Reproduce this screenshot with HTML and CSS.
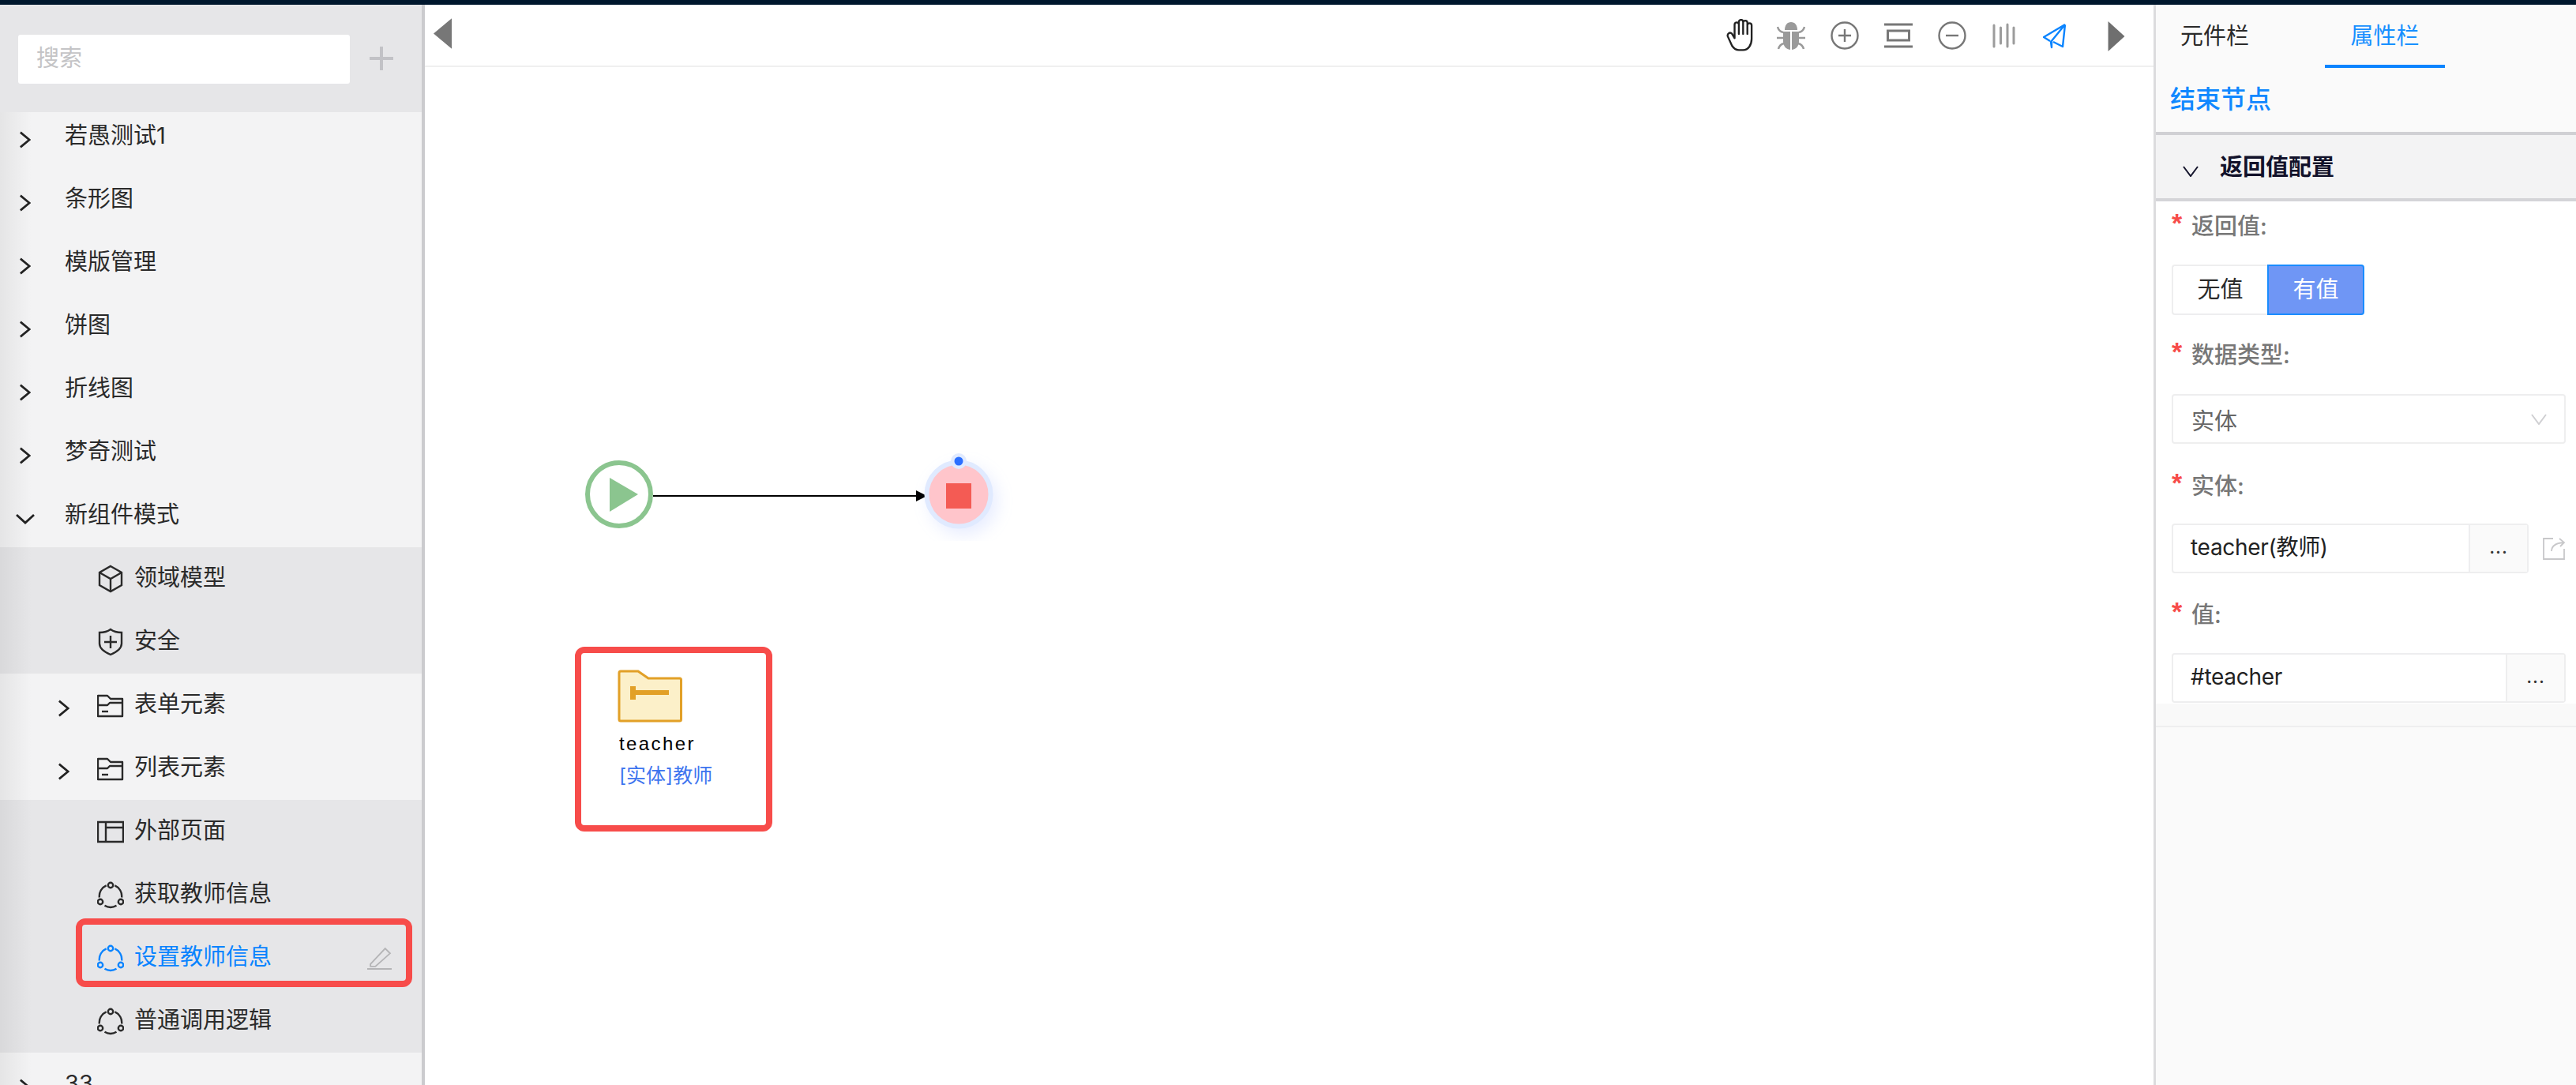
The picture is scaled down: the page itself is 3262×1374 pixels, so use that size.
FILE: index.html
```html
<!DOCTYPE html>
<html lang="zh-CN">
<head>
<meta charset="utf-8">
<title>流程设计</title>
<link rel="stylesheet" href="styles.css">
</head>
<body>
<div class="topbar"></div>
<div class="main">
  <aside class="sidebar">
    <div class="search-bar">
      <div class="search-input">搜索</div>
      <svg class="add" viewBox="0 0 30 30"><path d="M15 0V30M0 15H30"/></svg>
    </div>
    <div class="tree">
      <div class="row"><svg class="chev" viewBox="0 0 16 24"><path d="M2 2L14 12L2 22"/></svg><span class="label">若愚测试1</span></div>
      <div class="row"><svg class="chev" viewBox="0 0 16 24"><path d="M2 2L14 12L2 22"/></svg><span class="label">条形图</span></div>
      <div class="row"><svg class="chev" viewBox="0 0 16 24"><path d="M2 2L14 12L2 22"/></svg><span class="label">模版管理</span></div>
      <div class="row"><svg class="chev" viewBox="0 0 16 24"><path d="M2 2L14 12L2 22"/></svg><span class="label">饼图</span></div>
      <div class="row"><svg class="chev" viewBox="0 0 16 24"><path d="M2 2L14 12L2 22"/></svg><span class="label">折线图</span></div>
      <div class="row"><svg class="chev" viewBox="0 0 16 24"><path d="M2 2L14 12L2 22"/></svg><span class="label">梦奇测试</span></div>
      <div class="row"><svg class="chev open" viewBox="0 0 24 16"><path d="M1 3L12 13L23 3"/></svg><span class="label">新组件模式</span></div>
      <div class="group">
        <div class="row sub"><svg class="ico" viewBox="0 0 34 36"><path d="M17 2L31 10V26L17 34L3 26V10Z"/><path d="M3 10L17 18L31 10M17 18V34"/></svg><span class="label">领域模型</span></div>
        <div class="row sub"><svg class="ico" viewBox="0 0 34 36"><path d="M17 2C21 5 26 6 31 6V20C31 27 24 31 17 34C10 31 3 27 3 20V6C8 6 13 5 17 2Z"/><path d="M9 18H25M17 10V26"/></svg><span class="label">安全</span></div>
      </div>
      <div class="row sub2"><svg class="chev" viewBox="0 0 16 24"><path d="M2 2L14 12L2 22"/></svg><svg class="ico" viewBox="0 0 34 36"><path d="M1 6H13L17 10H32V32H1Z M1 18H13L16 15H33" stroke-linejoin="round"/><path d="M6 26H14"/></svg><span class="label">表单元素</span></div>
      <div class="row sub2"><svg class="chev" viewBox="0 0 16 24"><path d="M2 2L14 12L2 22"/></svg><svg class="ico" viewBox="0 0 34 36"><path d="M1 6H13L17 10H32V32H1Z M1 18H13L16 15H33" stroke-linejoin="round"/><path d="M6 26H14"/></svg><span class="label">列表元素</span></div>
      <div class="group">
        <div class="row sub"><svg class="ico" viewBox="0 0 34 36"><path d="M1 6H33V31H1Z M11 6V31 M11 13H33"/></svg><span class="label">外部页面</span></div>
        <div class="row sub"><svg class="ico" viewBox="0 0 34 36"><use href="#logic"/></svg><span class="label">获取教师信息</span></div>
        <div class="row sub active"><svg class="ico" viewBox="0 0 34 36"><use href="#logic"/></svg><span class="label">设置教师信息</span>
          <svg class="pen" viewBox="0 0 30 30"><path d="M4 23L22 4L28 10L10 26H4Z M0 29H30"/></svg>
          <div class="mark"></div>
        </div>
        <div class="row sub"><svg class="ico" viewBox="0 0 34 36"><use href="#logic"/></svg><span class="label">普通调用逻辑</span></div>
      </div>
      <div class="row"><svg class="chev" viewBox="0 0 16 24"><path d="M2 2L14 12L2 22"/></svg><span class="label">33</span></div>
    </div>
    <svg class="defs" width="0" height="0"><defs>
      <g id="logic"><circle cx="17" cy="6" r="3.2"/><circle cx="4" cy="27" r="3.2"/><circle cx="30" cy="27" r="3.2"/><path d="M11.6 6.400A14.500 14.500 0 0 0 2.900 21.500M22.400 6.400A14.500 14.500 0 0 1 31.100 21.500M9.500 31.800A14.500 14.500 0 0 0 24.500 31.800"/></g>
    </defs></svg>
  </aside>

  <section class="canvas">
    <div class="toolbar">
      <svg class="tri-left" viewBox="0 0 24 40"><path d="M24 0V40L0 20Z"/></svg>
      <div class="tools">
        <svg class="tool hand" viewBox="0 1.500 32 38"><path d="M10 24V8a2.500 2.500 0 0 1 5 0V5a2.500 2.500 0 0 1 5 0V6a2.500 2.500 0 0 1 5 0v3a2.500 2.500 0 0 1 5 0V25c0 7-4 13-10 13h-5c-4 0-6-2-8-5L2 22c-1-3 3-6 5-3l3 5M15 8V19M20 6V19M25 8V19" fill="none" stroke="#222" stroke-width="2.200" stroke-linecap="round" stroke-linejoin="round"/></svg>
        <svg class="tool" viewBox="0 0 36 38"><g fill="#9a9a9a"><path d="M10 12C10 6 13 2 18 2S26 6 26 12Z"/><path d="M8 14H17V37C11 36 8 32 8 26Z"/><path d="M19 14H28V26C28 32 25 36 19 37Z"/></g><path d="M1 8C2 12 4 14 8 15M35 8C34 12 32 14 28 15M0 22H8M28 22H36M2 36C3 32 5 30 9 29M34 36C33 32 31 30 27 29" fill="none" stroke="#9a9a9a" stroke-width="2.500"/></svg>
        <svg class="tool" viewBox="0 0 36 38"><g fill="none" stroke="#777" stroke-width="2.400"><circle cx="18" cy="19" r="16.500"/><path d="M10 19H26M18 11V27"/></g></svg>
        <svg class="tool" viewBox="0 0 36 38"><g fill="none" stroke="#777"><path d="M0 5H36M0 33H36" stroke-width="3"/><rect x="4.500" y="13" width="27" height="12" stroke-width="3"/></g></svg>
        <svg class="tool" viewBox="0 0 36 38"><g fill="none" stroke="#777" stroke-width="2.400"><circle cx="18" cy="19" r="16.500"/><path d="M10 19H26"/></g></svg>
        <svg class="tool" viewBox="0 0 36 38"><g stroke="#9c9c9c" stroke-width="3" stroke-linecap="round"><path d="M3 6V33M11.500 9V29M20 5V33M28 9V29"/></g></svg>
        <svg class="tool plane" viewBox="0 0 36 38"><path d="M28 5L1 21L9 26M28 5L10 27L11 34V26M28 5L25 33L13 27" fill="none" stroke="#0a84ff" stroke-width="2.400" stroke-linejoin="round"/></svg>
      </div>
      <svg class="tri-right" viewBox="0 0 22 40"><path d="M0 0V40L22 20Z"/></svg>
    </div>
    <div class="board">
      <svg class="flow" viewBox="0 0 1000 600" width="1000" height="600">
        <circle cx="246" cy="541" r="40" fill="#fff" stroke="#8bc58f" stroke-width="6"/>
        <path d="M234 520V563L270 541Z" fill="#8bc58f"/>
        <path d="M289 543H624" stroke="#000" stroke-width="2"/>
        <path d="M622 536L636 543L622 550Z" fill="#000"/>
        <circle class="end-node" cx="676" cy="541" r="40.500" fill="#ffc5cb" stroke="#e0eaff" stroke-width="6"/>
        <rect x="660" y="527" width="32" height="32" fill="#f45b54"/>
        <circle cx="676" cy="499" r="10" fill="#e0eaff"/>
        <circle cx="676" cy="499" r="5.500" fill="#2b6fff"/>
      </svg>
      <div class="entity">
        <svg class="folder" viewBox="0 0 84 68"><path d="M3 5a2 2 0 0 1 2-2H27L40 12H80a2 2 0 0 1 1.500 2V64a2 2 0 0 1-2 2H5a2 2 0 0 1-2-2Z" fill="#fcf0c9" stroke="#e2a027" stroke-width="3"/><path d="M17 22H24V27H66V33H24V39H17Z" fill="#e2a027"/></svg>
        <div class="entity-name">teacher</div>
        <div class="entity-type">[实体]教师</div>
      </div>
    </div>
  </section>

  <aside class="panel">
    <div class="tabs">
      <div class="tab">元件栏</div>
      <div class="tab on">属性栏</div>
    </div>
    <div class="node-title">结束节点</div>
    <div class="section-head"><svg class="sec-chev" viewBox="0 0 20 14"><path d="M1 1L10 13L19 1"/></svg><span>返回值配置</span></div>
    <div class="form">
      <div class="field-label"><i>*</i>返回值:</div>
      <div class="switch"><div class="opt">无值</div><div class="opt on">有值</div></div>
      <div class="field-label l2"><i>*</i>数据类型:</div>
      <div class="select"><span>实体</span><svg viewBox="0 0 20 14"><path d="M1 1L10 13L19 1"/></svg></div>
      <div class="field-label l3"><i>*</i>实体:</div>
      <div class="input-line">
        <div class="input short"><span class="val">teacher(教师)</span><span class="dots">...</span></div>
        <svg class="share" viewBox="0 0 28 28"><path d="M13 1H1V27H27V14M11 17C11 11 15 7 26 6M21 1L27 6L22 11"/></svg>
      </div>
      <div class="field-label l4"><i>*</i>值:</div>
      <div class="input wide"><span class="val">#teacher</span><span class="dots">...</span></div>
    </div>
    <div class="form-foot"></div>
  </aside>
</div>
</body>
</html>
```
FILE: styles.css
```css
* { box-sizing: border-box; }
html, body { margin: 0; height: 100%; overflow: hidden; }
body {
  width: 3262px;
  height: 1374px;
  background: #fff;
  font-family: "Inter", "Noto Sans CJK SC", sans-serif;
  color: #222;
}
.topbar { height: 6px; background: #00172d; }
.main { display: flex; height: 1368px; overflow: hidden; }

/* left sidebar */
.sidebar {
  position: relative;
  width: 538px;
  flex: none;
  background: #f3f3f4;
  border-right: 4px solid #cbcbce;
  overflow: hidden;
}
.sidebar::after {
  content: "";
  position: absolute;
  left: 0; top: 0; bottom: 0;
  width: 40px;
  background: linear-gradient(to right, rgba(0,0,0,.06), rgba(0,0,0,0));
  pointer-events: none;
}
.search-bar {
  position: relative;
  z-index: 1;
  height: 136px;
  background: #e6e6e8;
  display: flex;
  padding: 38px 0 0 23px;
}
.search-input {
  width: 420px;
  height: 62px;
  background: #fff;
  border-radius: 3px;
  color: #c4c4c6;
  font-size: 29px;
  line-height: 60px;
  padding-left: 23px;
}
.add { width: 30px; height: 30px; margin: 15px 0 0 25px; fill: none; stroke: #c2c2c6; stroke-width: 4; }
.tree { margin-top: -9px; }
.row {
  position: relative;
  display: flex;
  align-items: center;
  height: 80px;
  font-size: 29px;
  color: #2a2a2a;
  padding-left: 24px;
}
.label { line-height: 40px; position: relative; top: -1px; }
.chev { width: 15px; height: 24px; margin-top: 8px; margin-right: 43px; fill: none; stroke: #222; stroke-width: 2.800; flex: none; }
.chev.open { width: 24px; height: 16px; margin-left: -4px; margin-right: 38px; }
.group { background: #e6e6e8; }
.row.sub { padding-left: 123px; }
.row.sub2 { padding-left: 73px; }
.row.sub2 .chev { margin-right: 35px; }
.ico { width: 34px; height: 36px; margin-right: 13px; flex: none; fill: none; stroke: #2a2a2a; stroke-width: 2.400; }
.ico use { stroke: inherit; }
.defs { position: absolute; }
.active { color: #0a84ff; }
.active .ico { stroke: #0a84ff; }
.pen { position: absolute; right: 38px; top: 24px; width: 31px; height: 31px; fill: none; stroke: #b4b4b6; stroke-width: 1.800; }
.mark {
  position: absolute;
  left: 96px; top: -10px;
  width: 426px; height: 87px;
  border: 8px solid #f74c4a;
  border-radius: 12px;
}

/* canvas */
.canvas { flex: 1; min-width: 0; display: flex; flex-direction: column; }
.toolbar {
  height: 79px;
  flex: none;
  display: flex;
  align-items: flex-start;
  border-bottom: 2px solid #f0f0f0;
  padding: 20px 36px 0 11px;
}
.tri-left { width: 23px; height: 39px; fill: #777; margin-top: -3px; }
.tools { display: flex; gap: 32px; margin-left: auto; }
.tool { width: 36px; height: 38px; }
.tool.hand { position: relative; left: 3px; top: -2px; height: 41px; margin-bottom: -3px; }
.tool.plane { position: relative; left: -3px; }
.tri-right { width: 22px; height: 38px; margin: 1px 0 0 43px; fill: #6f6f6f; }
.board { position: relative; flex: 1; }
.flow { position: absolute; left: 0; top: 0; }
.end-node { filter: drop-shadow(6px 8px 10px rgba(110,140,255,.16)); }
.entity {
  position: absolute;
  left: 190px; top: 734px;
  width: 250px; height: 234px;
  border: 8px solid #f74c4a;
  border-radius: 12px;
  background: #fff;
  padding: 20px 0 0 45px;
}
.folder { display: block; width: 84px; height: 68px; }
.entity-name {
  font-family: "Liberation Sans", sans-serif;
  font-size: 24px;
  letter-spacing: 2.400px;
  line-height: 32px;
  color: #000;
  margin: 11px 0 0 3px;
}
.entity-type { font-size: 25px; line-height: 32px; color: #3f75ef; margin: 8px 0 0 3px; }

/* right panel */
.panel {
  width: 535px;
  flex: none;
  background: #fafafa;
  border-left: 3px solid #dcdcde;
  display: flex;
  flex-direction: column;
}
.tabs { display: flex; height: 80px; padding-left: 31px; }
.tab { font-size: 29px; line-height: 80px; color: #2a2a2a; position: relative; }
.tab.on {
  color: #1890ff;
  margin-left: 96px;
  width: 152px;
  text-align: center;
  border-bottom: 4px solid #0a84ff;
}
.node-title { font-size: 32px; font-weight: 500; color: #1088ff; line-height: 44px; padding: 18px 0 0 18px; height: 81px; }
.section-head {
  height: 88px;
  background: #f3f3f4;
  border-top: 4px solid #d0d0d4;
  border-bottom: 4px solid #d4d4d8;
  display: flex;
  align-items: center;
  font-size: 29px;
  font-weight: 700;
  color: #12122a;
  padding-left: 34px;
}
.section-head span { margin-left: 27px; position: relative; top: -2px; }
.sec-chev { width: 20px; height: 14px; margin-top: 12px; fill: none; stroke: #12122a; stroke-width: 2; }
.form { background: #fff; padding: 12px 13px 0 20px; height: 636px; }
.field-label { font-size: 29px; line-height: 40px; font-weight: 500; color: #777; height: 40px; }
.field-label i { font-style: normal; font-weight: 700; font-family: "Liberation Sans", sans-serif; color: #f74c4a; display: inline-block; width: 25px; font-size: 34px; line-height: 30px; position: relative; top: -3px; }
.switch { display: flex; margin-top: 28px; width: 244px; height: 64px; }
.opt { width: 121px; border: 2px solid #eeeeef; border-right: 0; border-radius: 4px 0 0 4px; background: #fff; text-align: center; line-height: 60px; font-size: 29px; color: #2a2a2a; }
.opt.on { width: 123px; background: #6f96f5; border: 2px solid #1a8cff; border-radius: 0 4px 4px 0; color: #fff; }
.l2 { margin-top: 31px; }
.select { display: flex; align-items: center; justify-content: space-between; margin-top: 29px; width: 499px; height: 63px; border: 2px solid #eeeeef; border-radius: 4px; padding: 0 22px 0 23px; font-size: 29px; color: #666; }
.select svg { width: 20px; height: 14px; fill: none; stroke: #cfcfd2; stroke-width: 2; }
.l3 { margin-top: 34px; }
.input-line { display: flex; align-items: center; gap: 18px; margin-top: 27px; }
.input { display: flex; height: 63px; border: 2px solid #eeeeef; border-radius: 4px; font-size: 28px; color: #222; background: #fff; }
.input.short { width: 452px; }
.input.wide { width: 499px; margin-top: 28px; }
.val { flex: 1; padding-left: 22px; line-height: 57px; letter-spacing: -.3px; }
.dots { width: 74px; flex: none; background: #fafafa; border-left: 2px solid #eeeeef; text-align: center; line-height: 56px; font-size: 24px; letter-spacing: 1px; color: #333; }
.share { width: 28px; height: 28px; fill: none; stroke: #c8c8ca; stroke-width: 1.800; }
.l4 { margin-top: 33px; }
.form-foot { height: 30px; background: #f9f9f9; border-bottom: 2px solid #eeeeef; }
```
